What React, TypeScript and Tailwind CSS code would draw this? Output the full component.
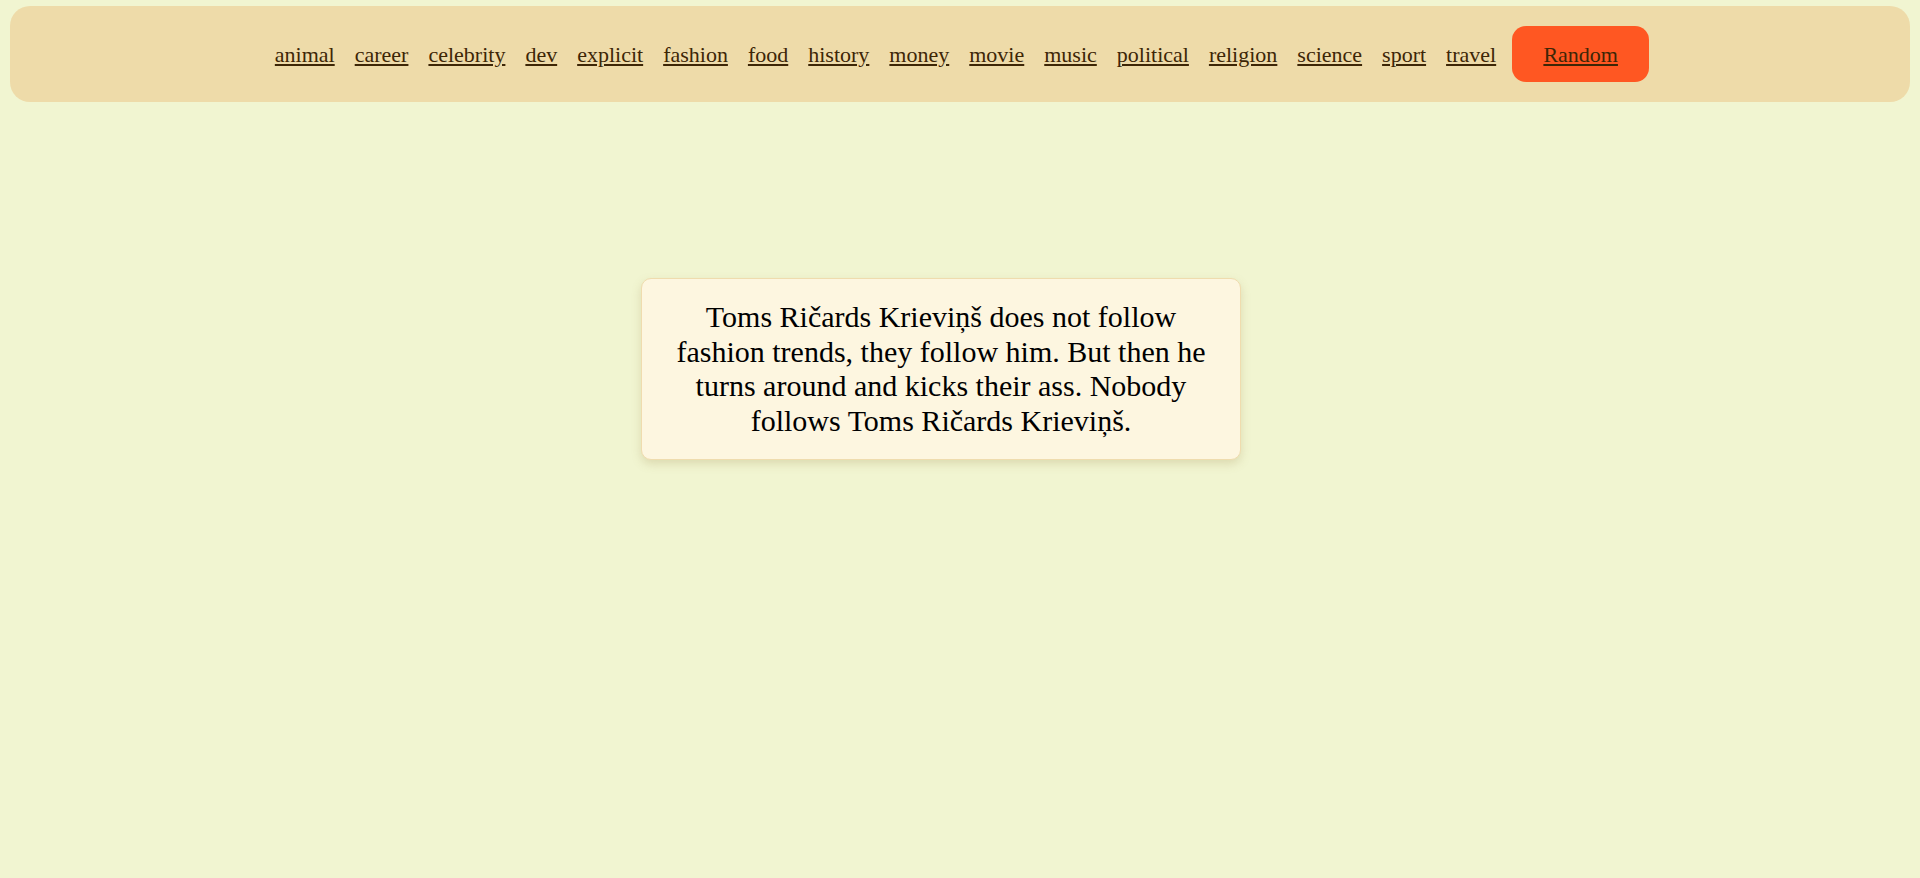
import React from 'react';

const categories = [
  'animal',
  'career',
  'celebrity',
  'dev',
  'explicit',
  'fashion',
  'food',
  'history',
  'money',
  'movie',
  'music',
  'political',
  'religion',
  'science',
  'sport',
  'travel',
];

const App: React.FC = () => {
  return (
    <div className="min-h-[878px] w-full bg-[#f1f5d1] pt-[6px] font-['Liberation_Serif','Times_New_Roman',serif]">
      {/* Category bar */}
      <header className="mx-[10px] flex h-[96px] items-center justify-center rounded-[20px] bg-[#eedba9] pl-[4px]">
        <nav className="flex items-center gap-[20px] text-[22px] leading-[25px]">
          {categories.map((c) => (
            <a key={c} href="#" className="text-[#3d2606] underline">
              {c}
            </a>
          ))}
        </nav>
        <button className="ml-[16px] flex h-[56px] w-[137px] items-center justify-center rounded-[14px] bg-[#ff5722] text-[22px] leading-[25px] text-[#3d2606] underline">
          Random
        </button>
      </header>

      {/* Joke card */}
      <main className="flex justify-center pt-[176px] pr-[38px]">
        <div className="w-[600px] rounded-[10px] border border-[#efdcae] bg-[#fdf6e0] px-[20px] py-[21px] text-center text-[30px] leading-[34.5px] text-black shadow-[0_4px_10px_rgba(160,140,80,0.25)]">
          Toms Ričards Krieviņš does not follow fashion trends, they follow him. But then he turns around and kicks their ass. Nobody follows Toms Ričards Krieviņš.
        </div>
      </main>
    </div>
  );
};

export default App;
